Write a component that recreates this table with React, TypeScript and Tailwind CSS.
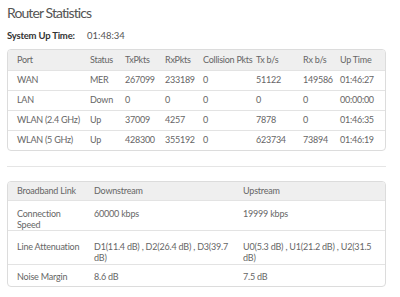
const ports = [
  ['WAN', 'MER', '267099', '233189', '0', '51122', '149586', '01:46:27'],
  ['LAN', 'Down', '0', '0', '0', '0', '0', '00:00:00'],
  ['WLAN (2.4 GHz)', 'Up', '37009', '4257', '0', '7878', '0', '01:46:35'],
  ['WLAN (5 GHz)', 'Up', '428300', '355192', '0', '623734', '73894', '01:46:19'],
];

const portCols = ['Port', 'Status', 'TxPkts', 'RxPkts', 'Collision Pkts', 'Tx b/s', 'Rx b/s', 'Up Time'];
const portWidths = ['w-[82px]', 'w-[35px]', 'w-[40px]', 'w-[38px]', 'w-[53px]', 'w-[47px]', 'w-[37px]', ''];

const broadband = [
  { label: 'Connection Speed', down: '60000 kbps', up: '19999 kbps', row: 'h-[28px]', pad: 'pt-[7px]' },
  {
    label: 'Line Attenuation',
    down: 'D1(11.4 dB) , D2(26.4 dB) , D3(39.7 dB)',
    up: 'U0(5.3 dB) , U1(21.2 dB) , U2(31.5 dB)',
    row: 'h-[34px]',
    pad: 'pt-[10px]',
  },
  { label: 'Noise Margin', down: '8.6 dB', up: '7.5 dB', row: 'h-[22px]', pad: 'pt-[6px]' },
];

export default function App() {
  return (
    <div className="w-[400px] h-[297px] bg-white overflow-hidden px-[7px] pt-[3px] font-['Lato',sans-serif] text-[#666]">
      <h1 className="text-[14px] leading-[20px] tracking-[-0.9px] text-[#555] font-normal">Router Statistics</h1>

      {/* Up time line */}
      <div className="flex mt-[7px] h-[12px] leading-[12px] text-[9.5px]">
        <span className="w-[80px] font-bold text-[#333] tracking-[-0.2px]">System Up Time:</span>
        <span className="text-[#555]">01:48:34</span>
      </div>

      {/* Port table */}
      <div className="mt-[7px] w-[379px] border border-[#dcdcdc] rounded-[4px] overflow-hidden">
        <table className="w-full table-fixed border-collapse whitespace-nowrap text-[9px] leading-[12px] tracking-[-0.25px]">
          <thead>
            <tr className="bg-[#efefef] h-[20px]">
              {portCols.map((c, i) => (
                <th key={c} className={`${portWidths[i]} text-left font-normal ${i === 0 ? 'pl-[9px]' : ''}`}>
                  {c}
                </th>
              ))}
            </tr>
          </thead>
          <tbody>
            {ports.map((row) => (
              <tr key={row[0]} className="h-[20px] border-t border-[#e3e3e3]">
                {row.map((v, i) => (
                  <td key={i} className={i === 0 ? 'pl-[9px]' : ''}>
                    {v}
                  </td>
                ))}
              </tr>
            ))}
          </tbody>
        </table>
      </div>

      <div className="mt-[15px] w-[379px] border-t border-[#e5e5e5]" />

      {/* Broadband table */}
      <div className="mt-[14px] w-[379px] border border-[#dcdcdc] rounded-[4px] overflow-hidden">
        <table className="w-full table-fixed border-collapse text-[9px] leading-[11px] tracking-[-0.2px]">
          <thead>
            <tr className="bg-[#efefef] h-[18px]">
              <th className="w-[86px] text-left font-normal pl-[9px]">Broadband Link</th>
              <th className="w-[149px] text-left font-normal">Downstream</th>
              <th className="text-left font-normal">Upstream</th>
            </tr>
          </thead>
          <tbody>
            {broadband.map((r) => (
              <tr key={r.label} className={`${r.row} border-t border-[#e3e3e3] align-top`}>
                <td className={`pl-[9px] pr-[12px] ${r.pad}`}>{r.label}</td>
                <td className={`pr-[4px] ${r.pad}`}>{r.down}</td>
                <td className={`pr-[12px] ${r.pad}`}>{r.up}</td>
              </tr>
            ))}
          </tbody>
        </table>
      </div>
    </div>
  );
}
